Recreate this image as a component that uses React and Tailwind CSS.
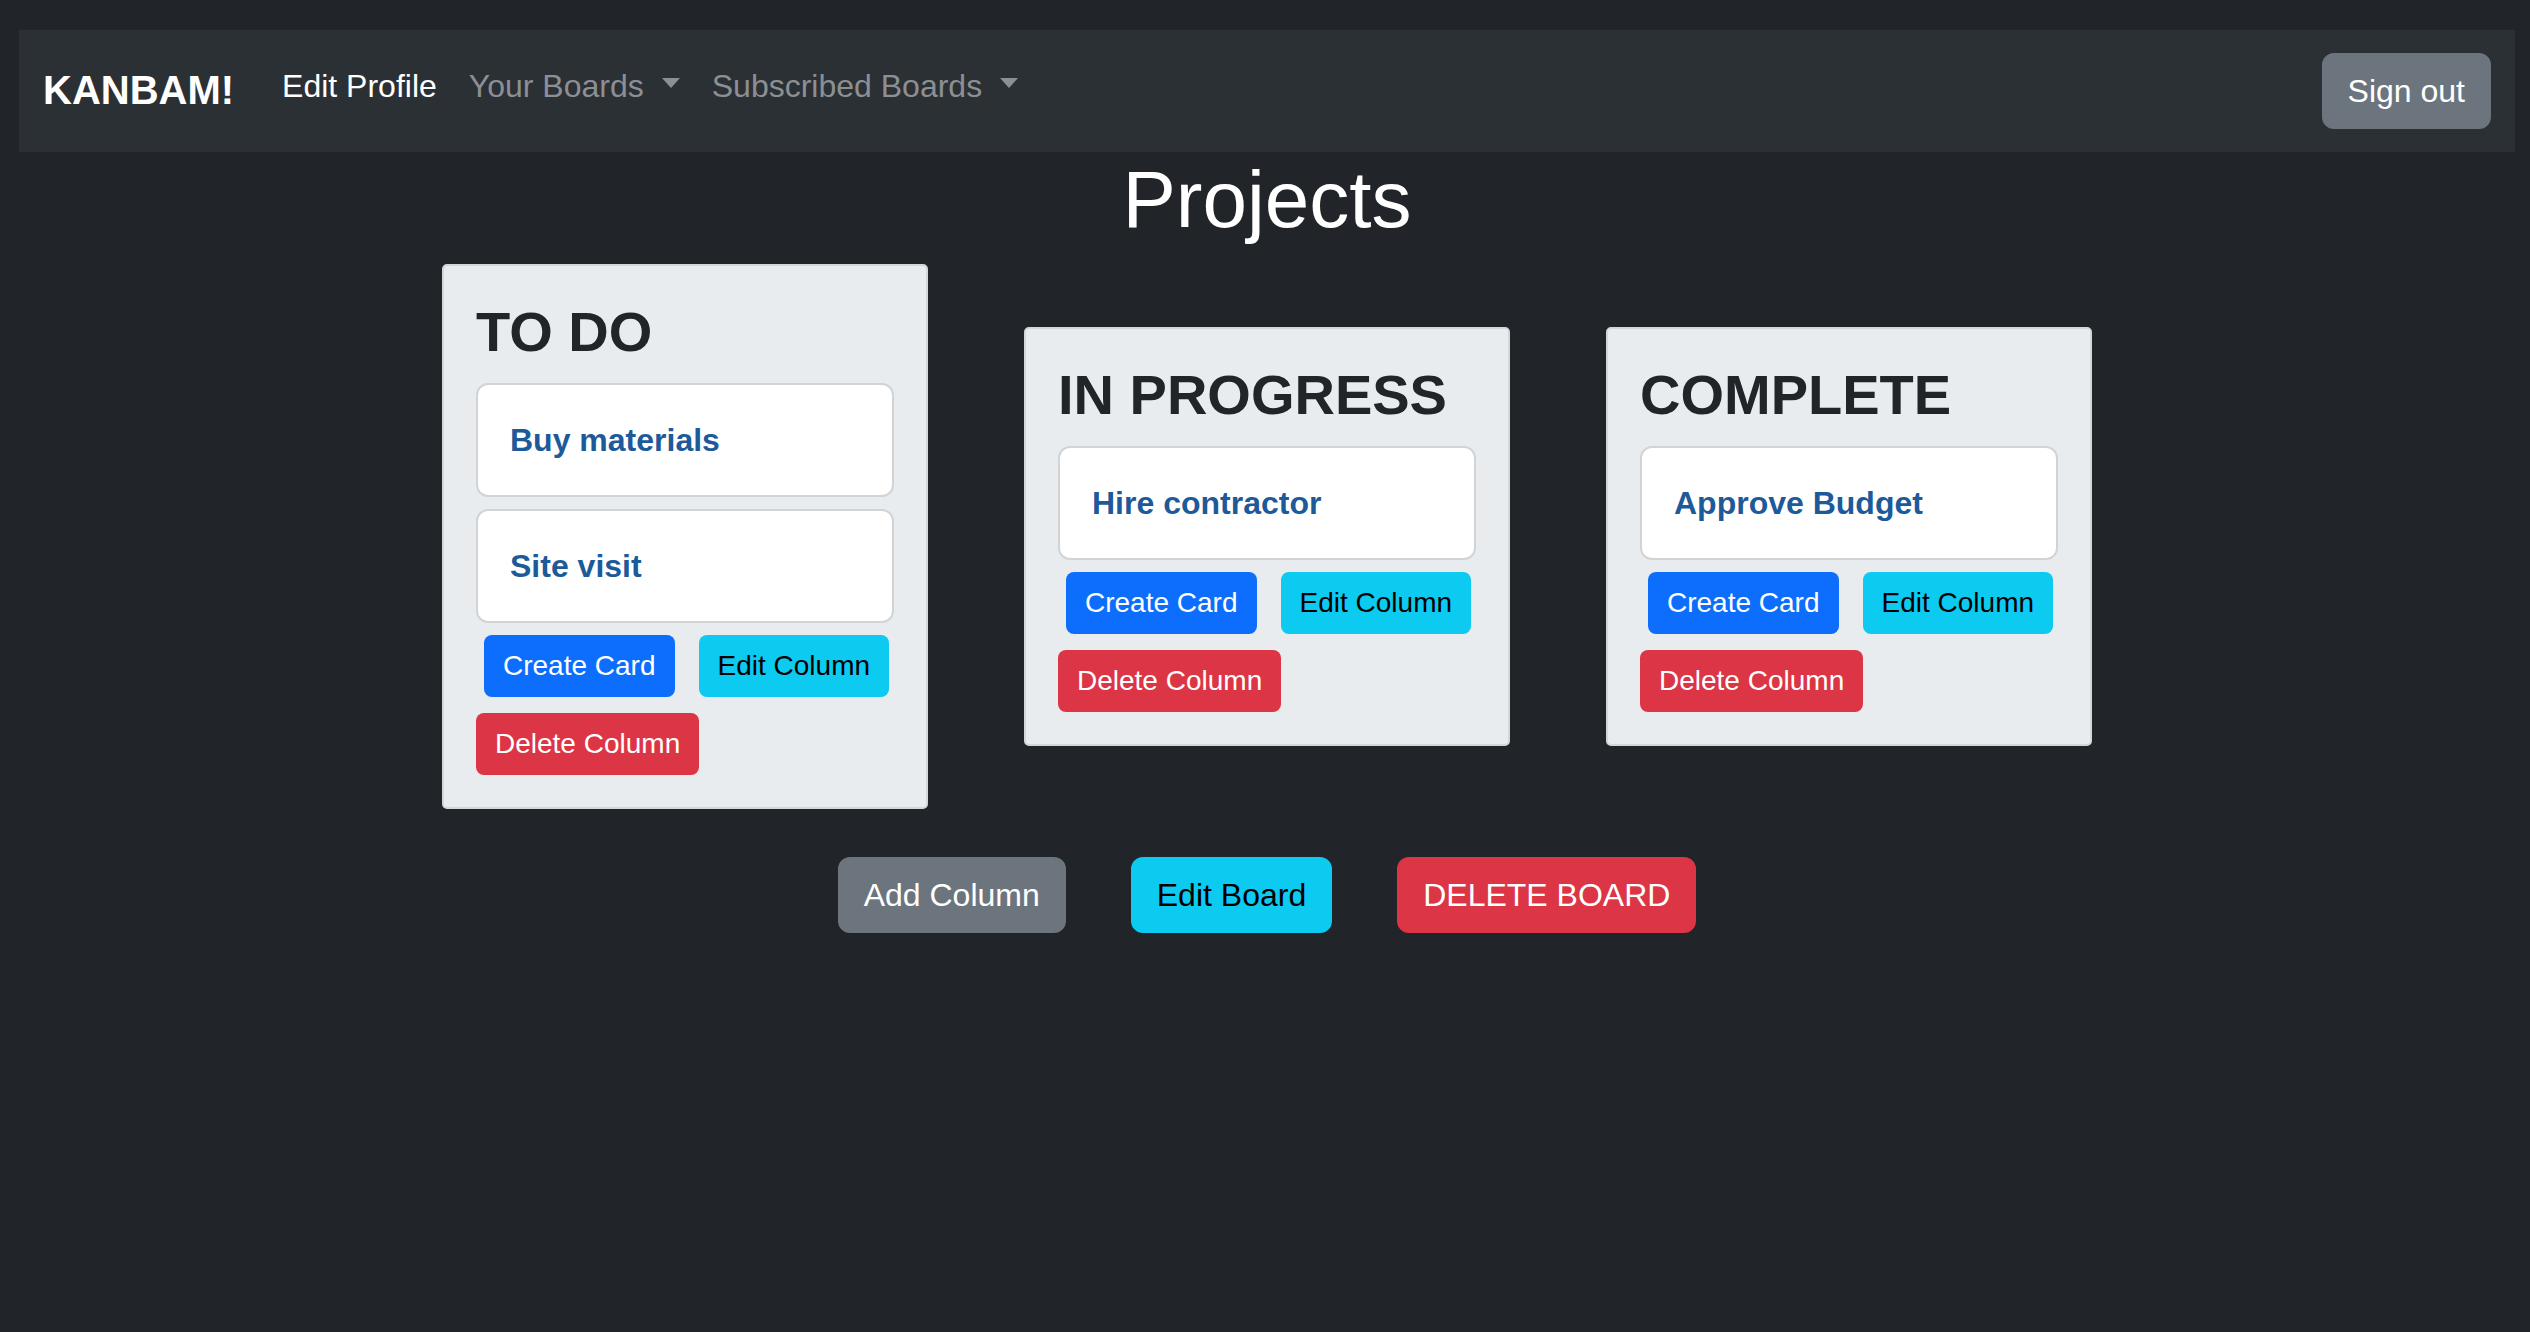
const columns = [
  { title: "TO DO", tasks: ["Buy materials", "Site visit"] },
  { title: "IN PROGRESS", tasks: ["Hire contractor"] },
  { title: "COMPLETE", tasks: ["Approve Budget"] },
];

function Caret() {
  return (
    <span className="ml-[18px] inline-block align-[0.255em] border-x-[9px] border-t-[10px] border-x-transparent border-t-current" />
  );
}

function Navbar() {
  return (
    <nav className="ml-[19px] mr-[15px] flex h-[122px] items-center justify-between bg-[#2b3035] px-6">
      <div className="flex items-center">
        <a className="mr-[32px] mb-[2px] text-[40px] font-bold leading-[60px] text-white">KANBAM!</a>
        <div className="mb-[11px] flex items-center text-[32px] leading-[48px]">
          <a className="px-[16px] text-white">Edit Profile</a>
          <a className="px-[16px] text-[#8c8f93]">
            Your Boards
            <Caret />
          </a>
          <a className="px-[16px] text-[#8c8f93]">
            Subscribed Boards
            <Caret />
          </a>
        </div>
      </div>
      <button className="rounded-[12px] border-2 border-[#6c757d] bg-[#6c757d] px-[24px] py-[12px] text-[32px] leading-[48px] text-white">
        Sign out
      </button>
    </nav>
  );
}

function SmallButton({ className, children }) {
  return (
    <button
      className={
        "rounded-[8px] border border-transparent px-[18px] py-[9px] text-[28px] leading-[42px] " +
        className
      }
    >
      {children}
    </button>
  );
}

function Column({ title, tasks }) {
  return (
    <div className="w-[486px] rounded-[5px] border-2 border-[#d4d7da] bg-[#e9ecef] p-[32px]">
      <h3 className="mb-[18px] text-[56px] font-bold leading-[1.2] text-[#212529]">{title}</h3>
      <div className="flex flex-col gap-[12px]">
        {tasks.map((t) => (
          <div key={t} className="rounded-[12px] border-2 border-[#d2d3d5] bg-white p-[32px]">
            <h5 className="text-[32px] font-bold leading-[46px] text-[#1d5a9a]">{t}</h5>
          </div>
        ))}
      </div>
      <div className="mt-[12px] flex gap-[24px] pl-[8px]">
        <SmallButton className="bg-[#0d6efd] text-white">Create Card</SmallButton>
        <SmallButton className="bg-[#0dcaf0] text-black">Edit Column</SmallButton>
      </div>
      <div className="mt-[16px]">
        <SmallButton className="bg-[#dc3545] text-white">Delete Column</SmallButton>
      </div>
    </div>
  );
}

export default function App() {
  return (
    <div className="min-h-[1332px] bg-[#212529] pt-[30px] font-['Liberation_Sans',Arial,sans-serif]">
      <Navbar />
      <main className="flex flex-col items-center pl-[4px]">
        <h1 className="mt-[8px] text-[80px] leading-[80px] text-white">Projects</h1>
        <div className="mt-[24px] flex items-center gap-[96px]">
          {columns.map((c) => (
            <Column key={c.title} {...c} />
          ))}
        </div>
        <div className="mt-[48px] flex gap-[65px]">
          <button className="rounded-[12px] border-2 border-[#6c757d] bg-[#6c757d] px-[24px] py-[12px] text-[32px] leading-[48px] text-white">
            Add Column
          </button>
          <button className="rounded-[12px] border-2 border-[#0dcaf0] bg-[#0dcaf0] px-[24px] py-[12px] text-[32px] leading-[48px] text-black">
            Edit Board
          </button>
          <button className="rounded-[12px] border-2 border-[#dc3545] bg-[#dc3545] px-[24px] py-[12px] text-[32px] leading-[48px] text-white">
            DELETE BOARD
          </button>
        </div>
      </main>
    </div>
  );
}
